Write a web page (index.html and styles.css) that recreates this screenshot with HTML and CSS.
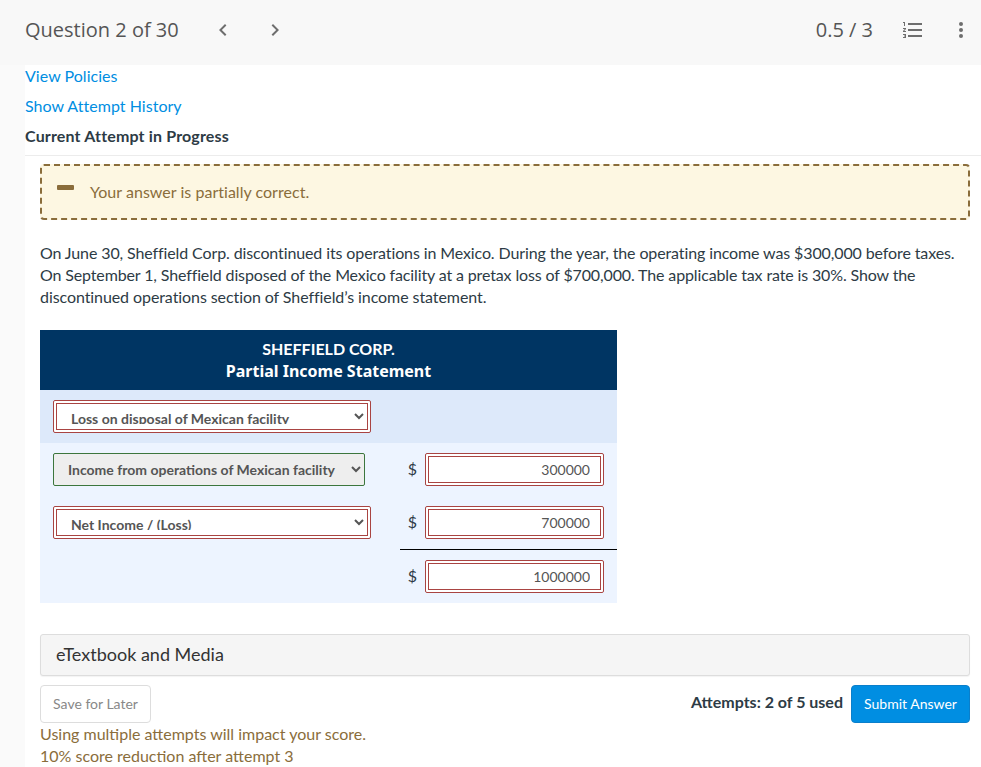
FILE: index.html
```html
<!DOCTYPE html>
<html lang="en">
<head>
    <meta charset="UTF-8">
    <title>Question 2 of 30</title>
    <link rel="stylesheet" href="styles.css">
</head>
<body>
<header class="topbar">
    <h1 class="question-title">Question 2 of 30</h1>
    <button class="icon-btn prev" aria-label="Previous">
        <svg width="24" height="24" viewBox="0 0 24 24"><path d="M15.41 7.41 14 6l-6 6 6 6 1.41-1.41L10.83 12z"/></svg>
    </button>
    <button class="icon-btn next" aria-label="Next">
        <svg width="24" height="24" viewBox="0 0 24 24"><path d="M10 6 8.59 7.41 13.17 12l-4.58 4.59L10 18l6-6z"/></svg>
    </button>
    <div class="score">0.5 / 3</div>
    <button class="icon-btn list" aria-label="Question list">
        <svg width="24" height="24" viewBox="0 0 24 24"><path d="M2 17h2v.5H3v1h1v.5H2v1h3v-4H2v1zm1-9h1V4H2v1h1v3zm-1 3h1.800L2 13.100v.9h3v-1H3.200L5 10.900V10H2v1zm5-6v2h14V5H7zm0 14h14v-2H7v2zm0-6h14v-2H7v2z"/></svg>
    </button>
    <button class="icon-btn more" aria-label="More">
        <svg width="24" height="24" viewBox="0 0 24 24"><circle cx="12" cy="6" r="2"/><circle cx="12" cy="12" r="2"/><circle cx="12" cy="18" r="2"/></svg>
    </button>
</header>

<main class="content">
    <div class="links">
        <a href="#">View Policies</a>
        <a href="#">Show Attempt History</a>
        <strong>Current Attempt in Progress</strong>
    </div>
    <div class="question">
        <div class="alert">
            <span class="minus"></span>
            <span class="alert-text">Your answer is partially correct.</span>
        </div>
        <p class="prompt">
            <span class="line line1">On June 30, Sheffield Corp. discontinued its operations in Mexico. During the year, the operating income was $300,000 before taxes.</span>
            <span class="line line2">On September 1, Sheffield disposed of the Mexico facility at a pretax loss of $700,000. The applicable tax rate is 30%. Show the</span>
            <span class="line line3">discontinued operations section of Sheffield’s income statement.</span>
        </p>
        <table class="statement">
            <colgroup>
                <col class="col-account">
                <col class="col-sign">
                <col>
            </colgroup>
            <thead>
            <tr>
                <th colspan="3">SHEFFIELD CORP.<br><span class="subtitle">Partial Income Statement</span></th>
            </tr>
            </thead>
            <tbody>
            <tr class="shaded">
                <td class="account"><select class="wrong"><option>Loss on disposal of Mexican facility</option></select></td>
                <td class="sign"></td>
                <td class="amount"></td>
            </tr>
            <tr>
                <td class="account"><select class="right"><option>Income from operations of Mexican facility</option></select></td>
                <td class="sign">$</td>
                <td class="amount"><input class="wrong" type="text" value="300000"></td>
            </tr>
            <tr>
                <td class="account"><select class="wrong"><option>Net Income / (Loss)</option></select></td>
                <td class="sign">$</td>
                <td class="amount"><input class="wrong" type="text" value="700000"></td>
            </tr>
            <tr class="total">
                <td class="account"></td>
                <td class="sign">$</td>
                <td class="amount"><input class="wrong" type="text" value="1000000"></td>
            </tr>
            </tbody>
        </table>
        <div class="panel">eTextbook and Media</div>
        <div class="actions">
            <button class="btn save">Save for Later</button>
            <span class="attempts">Attempts: 2 of 5 used</span>
            <button class="btn submit">Submit Answer</button>
        </div>
        <div class="notice">Using multiple attempts will impact your score.<br>10% score reduction after attempt 3</div>
    </div>
</main>
</body>
</html>
```
FILE: styles.css
```css
* {
    box-sizing: border-box;
}

body {
    margin: 0;
    height: 767px;
    overflow: hidden;
    background-color: #fafafa;
    color: #2d3b45;
    font-family: Lato, sans-serif;
    font-size: 16px;
    line-height: 22px;
}

.topbar {
    display: flex;
    align-items: center;
    height: 65px;
    padding: 0 8px 5px 25px;
    background-color: #f8f8f8;
    color: #555;
    font-family: "Open Sans", sans-serif;
    font-size: 20px;
}

.question-title {
    margin: 0;
    width: 186px;
    font-size: 20px;
    font-weight: 400;
}

.icon-btn {
    display: flex;
    width: 24px;
    height: 24px;
    padding: 0;
    border: 0;
    background: none;
    fill: #6e6e6e;
}

.next {
    margin-left: 28px;
}

.score {
    margin-left: auto;
}

.list {
    margin-left: 28px;
}

.more {
    margin-left: 24px;
}

.content {
    height: 702px;
    margin-left: 25px;
    background-color: #fff;
}

.links {
    display: flex;
    flex-direction: column;
    gap: 8px;
    height: 91px;
    border-bottom: 1px solid #ececec;
}

.links a {
    color: #008ee2;
    letter-spacing: .03px;
    text-decoration: none;
}

.links strong {
    letter-spacing: .16px;
}

.question {
    padding: 8px 11px 0 15px;
}

.alert {
    display: flex;
    height: 56px;
    padding: 15px;
    border: 2px dashed #8a6d3b;
    border-radius: 4px;
    background-color: #fdf7e2;
    color: #8a6d3b;
}

.alert-text {
    letter-spacing: .03px;
}

.minus {
    width: 17px;
    height: 5px;
    margin: 4px 16px 0 0;
    border-radius: 1px;
    background-color: #8a6d3b;
}

.prompt {
    margin: 22px 0;
}

.line {
    display: block;
    white-space: nowrap;
}

.line1 {
    letter-spacing: -.115px;
}

.line2 {
    letter-spacing: -.135px;
}

.line3 {
    letter-spacing: -.08px;
}

.statement {
    width: 577px;
    border-collapse: separate;
    border-spacing: 0;
    table-layout: fixed;
    background-color: #edf4ff;
}

.col-account {
    width: 360px;
}

.col-sign {
    width: 25px;
}

.statement th {
    height: 60px;
    padding: 0;
    background-color: #003563;
    color: #fff;
    font-weight: 700;
}

.subtitle {
    font-family: "Noto Sans", sans-serif;
}

.statement td {
    height: 53px;
    padding: 0;
}

.statement .account {
    padding-left: 13px;
}

.statement .sign {
    padding-bottom: 2px;
    text-align: center;
}

.shaded {
    background-color: #dde9fa;
}

.total .sign,
.total .amount {
    height: 54px;
    border-top: 1px solid #000;
}

.statement select,
.statement input {
    display: block;
    height: 33px;
    padding: 6px 10px;
    border-radius: 2px;
    background-color: #fff;
    color: #555;
    font-family: Lato, sans-serif;
    font-size: 14px;
    line-height: 20px;
}

.statement select {
    width: 318px;
    font-weight: 700;
}

.statement input {
    width: 179px;
    text-align: right;
}

.statement .wrong {
    border: 4px double #a94442;
}

.statement select.wrong {
    padding-top: 5px;
    padding-bottom: 5px;
}

.statement .right {
    width: 312px;
    border: 1px solid #3c763d;
    background-color: #eee;
}

.panel {
    height: 42px;
    margin-top: 31px;
    padding: 8px 15px;
    border: 1px solid #ddd;
    border-radius: 3px;
    box-shadow: 0 1px 1px rgba(0, 0, 0, .05);
    background-color: #f5f5f5;
    color: #333;
    font-size: 18px;
}

.actions {
    display: flex;
    margin-top: 9px;
}

.btn {
    height: 38px;
    padding: 0 0 2px;
    border: 1px solid #ddd;
    border-radius: 4px;
    background-color: #fff;
    color: #888;
    font-family: Lato, sans-serif;
    font-size: 14px;
}

.save {
    width: 111px;
}

.attempts {
    margin: 6px 8px 0 auto;
    font-weight: 700;
}

.submit {
    width: 119px;
    border-color: #0a7fcb;
    background-color: #008ee2;
    color: #fff;
}

.notice {
    color: #8a6d3b;
}
```
